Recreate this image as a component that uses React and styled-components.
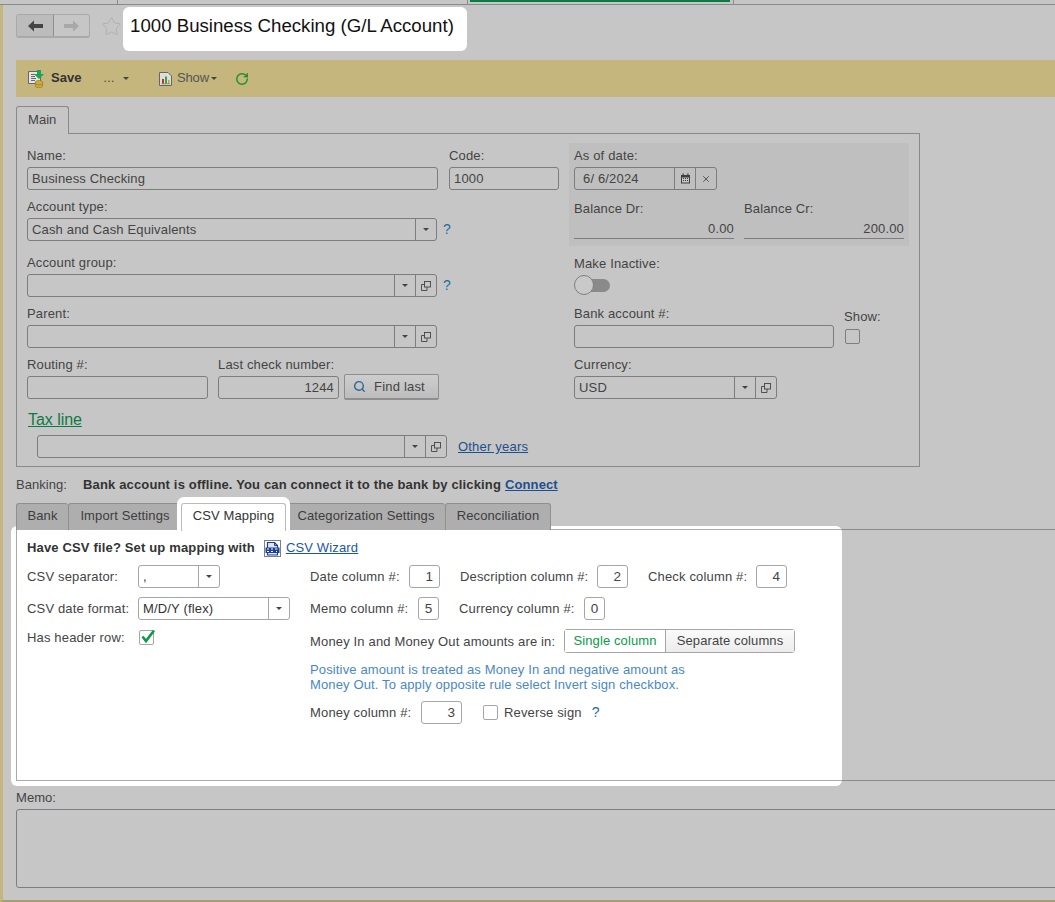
import React from 'react';
import styled, { createGlobalStyle } from 'styled-components';
import { RotateCw, Search, Star, X } from 'lucide-react';

const Global = createGlobalStyle`
  html, body { margin: 0; padding: 0; background: #c6c6c6; }
  * { box-sizing: border-box; }
  body { font-family: "Liberation Sans", Arial, sans-serif; font-size: 13px; color: #444; }
`;

const Page = styled.div`
  width: 1055px; height: 902px; overflow: hidden; background: #c6c6c6;
  display: flex; flex-direction: column;
`;
const TopStrip = styled.div`
  display: flex; height: 5px; flex: none; border-bottom: 1px solid #8a8a8a;
`;
const TopCell = styled.div`
  width: ${p => p.$w}px; height: 4px; border-right: 1px solid #8a8a8a; padding: 0 3px 0 2px;
`;
const GreenBar = styled.div`height: 2px; background: #0b7a45;`;
const Shell = styled.div`
  flex: 1; min-height: 0; border-left: 3px solid #c4b67d; border-bottom: 2px solid #a89e72;
  padding: 2px 0 0 13px; display: flex; flex-direction: column;
`;
const Header = styled.div`display: flex; align-items: flex-start; height: 44px; flex: none;`;
const Nav = styled.div`
  display: flex; margin-top: 7px; width: 74px; height: 24px;
  border: 1px solid #a9a9a9; border-bottom-width: 2px; border-radius: 3px;
`;
const NavBtn = styled.div`
  width: ${p => p.$w}px; display: flex; align-items: center; justify-content: center;
  ${p => p.$on ? 'background:#bcbcbc; border-right:1px solid #8e8e8e;' : ''}
`;
const StarBox = styled.div`margin: 9px 0 0 11px; width: 21px; height: 21px; color: #adadad;`;
const TitleCard = styled.div`
  margin-left: 1px; width: 344px; height: 44px; background: #fff; border-radius: 6px;
  padding: 7px 0 0 7px; font-size: 18.67px; line-height: 24px; color: #111; white-space: nowrap;
`;
const Toolbar = styled.div`
  flex: none; margin-top: 9px; height: 37px; background: #c4b67d; display: flex; align-items: center;
  padding-left: 12px; color: #444;
`;
const ToolSave = styled.span`font-weight: bold; margin: 0 0 2px 6px; color: #333;`;
const ToolDots = styled.span`margin: 0 0 2px 22px; font-size: 12px; color: #444; letter-spacing: .5px;`;
const ToolShow = styled.span`margin: 0 0 2px 5px; color: #555; letter-spacing: -.1px;`;
const ToolGap = styled.span`flex: none; width: ${p => p.$w}px;`;
const Caret = styled.i`
  display: inline-block; width: 0; height: 0; border-left: 3px solid transparent; border-right: 3px solid transparent;
  border-top: 3px solid ${p => p.$c || '#444'}; margin-left: ${p => p.$ml ?? 0}px;
`;
const MainTab = styled.div`
  margin-top: 9px; flex: none; width: 53px; height: 28px; margin-bottom: -1px; border: 1px solid #8a8a8a; border-bottom: none;
  border-radius: 3px 3px 0 0; background: #c6c6c6; position: relative; z-index: 1;
  padding: 5px 0 0 11px; line-height: 16px; color: #444; letter-spacing: .05px;
`;
const FormBox = styled.div`
  flex: none; width: 904px; height: 334px; border: 1px solid #8a8a8a;
  display: flex; padding: 9px 0 0 10px; gap: 10px;
`;
const LeftCol = styled.div`width: 532px; padding-top: 5px; display: flex; flex-direction: column;`;
const RightCol = styled.div`width: 340px; display: flex; flex-direction: column;`;
const Row = styled.div`
  display: flex; align-items: ${p => p.$align || 'flex-start'}; gap: ${p => p.$gap ?? 0}px;
  margin-top: ${p => p.$mt ?? 0}px; margin-left: ${p => p.$ml ?? 0}px;
`;
const Field = styled.div`
  display: flex; flex-direction: column; width: ${p => p.$w ? p.$w + 'px' : 'auto'};
  margin-top: ${p => p.$mt ?? 0}px; margin-left: ${p => p.$ml ?? 0}px;
`;
const Label = styled.div`
  height: 15px; line-height: 15px; margin-bottom: 4px; color: #444; white-space: nowrap; letter-spacing: .15px;
`;
const Input = styled.div`
  height: 23px; width: ${p => p.$w ? p.$w + 'px' : '100%'}; border: 1px solid #7d7d7d; border-radius: 3px;
  line-height: 21px; padding: 0 4px; color: #444; white-space: nowrap; letter-spacing: .15px;
  text-align: ${p => p.$right ? 'right' : 'left'};
`;
const Combo = styled.div`
  display: flex; height: 23px; width: ${p => p.$w}px; border-radius: 3px;
  border: 1px solid ${p => p.$light ? '#a6a6a6' : '#7d7d7d'}; color: ${p => p.$light ? '#333' : '#444'};
  line-height: 21px; letter-spacing: .16px;
`;
const ComboText = styled.div`flex: 1; padding-left: ${p => p.$pl ?? 4}px; white-space: nowrap; overflow: hidden;`;
const ComboBtn = styled.div`
  flex: none; width: ${p => p.$w ?? 21}px; height: 100%;
  border-left: 1px solid ${p => p.$light ? '#a6a6a6' : '#7d7d7d'}; display: flex; align-items: center; justify-content: center;
`;
const Help = styled.span`color: #1f6e9e; font-size: 14px; line-height: 23px; margin-left: ${p => p.$ml ?? 6}px;`;
const TaxLink = styled.a`
  display: block; margin: 11px 0 0 1px; font-size: 16px; line-height: 18px; color: #0b7a45; text-decoration: underline; letter-spacing: -.05px;
`;
const OtherLink = styled.a`
  margin-left: 11px; line-height: 23px; color: #1d4f8f; text-decoration: underline; letter-spacing: .2px;
`;
const FindBtn = styled.div`
  margin: -2px 0 0 5px; width: 95px; height: 26px; border: 1px solid #8e8e8e; border-bottom-width: 2px; border-radius: 2px;
  background: linear-gradient(#cdcdcd, #bdbdbd);
  display: flex; align-items: center; padding-left: 8px; gap: 8px; color: #444; letter-spacing: .2px;
`;
const AsOf = styled.div`
  background: #bfbfbf; height: 103px; padding: 5px 0 0 5px; display: flex; flex-direction: column;
`;
const Balance = styled.div`
  margin-top: -1px; height: 20px; border-bottom: 1px solid #7d7d7d; width: ${p => p.$w ?? 160}px; text-align: right;
  line-height: 19px; letter-spacing: .15px;
`;
const Track = styled.div`
  position: relative; width: 36px; height: 20px;
  &::before { content: ''; position: absolute; left: 4px; right: 0; top: 4px; height: 13px; border-radius: 7px; background: #8a8a8a; }
`;
const Thumb = styled.div`
  position: absolute; left: 0; top: 0; width: 20px; height: 20px; border-radius: 50%; background: #c9c9c9; border: 1px solid #808080; border-bottom-width: 1.5px;
`;
const Check = styled.div`
  flex: none; width: 15px; height: 15px; border: 1px solid ${p => p.$c || '#7d7d7d'}; border-radius: 2px;
  margin-top: ${p => p.$mt ?? 0}px; margin-left: ${p => p.$ml ?? 0}px; position: relative;
`;
const CheckMark = styled.svg`position: absolute; left: 0; top: -3px; overflow: visible;`;
const Banking = styled.div`flex: none; display: flex; margin-top: 10px; height: 15px; line-height: 15px; white-space: nowrap;`;
const BankingLabel = styled.span`width: 67px; color: #444; letter-spacing: .05px;`;
const BankingText = styled.span`font-weight: bold; color: #333; letter-spacing: .155px;`;
const BankLink = styled.a`margin-left: 4px; color: #1d4f8f; font-weight: bold; text-decoration: underline; letter-spacing: .1px;`;
const Tabs = styled.div`display: flex; flex: none; margin-top: 11px; height: 27px; position: relative; z-index: 2;`;
const Tab = styled.div`
  flex: none; width: ${p => p.$w}px; height: 27px; text-align: center; line-height: 24px; white-space: nowrap;
  border: 1px solid #8f8f8f; border-bottom: none; border-right-width: ${p => p.$last ? 1 : 0}px;
  border-radius: 3px 3px 0 0; background: #aeaeae; color: #3d3d3d; letter-spacing: .12px;
  ${p => p.$on && `
    background: #fff; color: #333; border: 1px solid #bbb; border-bottom: none; position: relative; z-index: 3;
    box-shadow: 0 0 0 4px #fff, 0 -2px 0 4px #fff; height: 28px;
  `}
`;
const TabBody = styled.div`
  flex: none; margin-top: -1px; height: 252px; border-top: 1px solid #8a8a8a; border-bottom: 1px solid #8a8a8a; position: relative;
`;
const Card = styled.div`
  position: relative; margin: -4px 0 0 -5px; width: 831px; height: 260px; background: #fff; border-radius: 6px; padding: 3px 0 5px 5px;
`;
const Inner = styled.div`
  height: 252px; border: 1px solid #aaa; border-right: none; padding: 9px 0 0 10px; color: #444;
`;
const HaveRow = styled.div`display: flex; align-items: center; height: 16px; white-space: nowrap;`;
const HaveText = styled.span`font-weight: bold; color: #333; letter-spacing: .16px; margin-right: 9px;`;
const IconNudge = styled.span`display: flex; flex: none; margin-top: 2px;`;
const WizardLink = styled.a`margin-left: 5px; color: #1a56a8; text-decoration: underline; letter-spacing: .15px;`;
const CsvGrid = styled.div`display: flex; margin-top: 10px;`;
const CsvLeft = styled.div`width: 283px; flex: none; display: flex; flex-direction: column;`;
const CsvRight = styled.div`flex: 1; display: flex; flex-direction: column;`;
const CsvRow = styled.div`display: flex; align-items: center; height: ${p => p.$h ?? 23}px; margin-top: ${p => p.$mt ?? 0}px;`;
const RowLabel = styled.div`flex: none; width: ${p => p.$w}px; margin-left: ${p => p.$ml ?? 0}px; color: #444; white-space: nowrap; letter-spacing: .16px;`;
const NumBox = styled.div`
  flex: none; height: 23px; width: ${p => p.$w}px; border: 1px solid #a6a6a6; border-radius: 3px; line-height: 21px;
  text-align: ${p => p.$center ? 'center' : 'right'}; padding-right: ${p => p.$center ? 0 : 6}px; color: #444; font-size: 13.5px;
`;
const Segs = styled.div`display: flex; height: 24px; width: 231px; border: 1px solid #a6a6a6; border-radius: 3px;`;
const Seg = styled.div`
  width: ${p => p.$w}px; flex: none; text-align: center; line-height: 22px; letter-spacing: .12px;
  ${p => p.$on ? 'color:#0b9a4b; background:#fff; border-right:1px solid #a6a6a6;' : 'color:#444; background:linear-gradient(#fafafa,#ececec);'}
`;
const InfoText = styled.div`
  margin-top: 9px; font-size: 13px; line-height: 15px; color: #4a88c4; letter-spacing: .14px; white-space: nowrap;
`;
const Side = styled.span`margin-left: 6px; white-space: nowrap; color: #444; letter-spacing: .15px;`;
const MemoLabel = styled.div`flex: none; margin-top: 9px; height: 15px; line-height: 15px; color: #444; letter-spacing: .05px;`;
const MemoBox = styled.div`flex: none; margin-top: 4px; width: 1050px; height: 79px; border: 1px solid #7d7d7d; border-radius: 3px;`;

const ArrowL = ({ c }) => (
  <svg width="15" height="12" viewBox="0 0 15 12"><path d="M0 6 6 .5V4h9v4H6v3.500z" fill={c} /></svg>
);
const ArrowR = ({ c }) => (
  <svg width="15" height="12" viewBox="0 0 15 12"><path d="M15 6 9 .5V4H0v4h9v3.500z" fill={c} /></svg>
);
const Popout = () => (
  <svg width="10" height="10" viewBox="0 0 10 10" fill="none" stroke="#444" strokeWidth=".9">
    <rect x="3.500" y=".5" width="6" height="5.500" />
    <path d="M3.500 3.500h-3v6h5.500V6" />
  </svg>
);
const SmallCaret = ({ c }) => <Caret $c={c} />;
const SaveIcon = () => (
  <svg width="17" height="18" viewBox="0 0 17 18">
    <path d="M.5 1.500h9l3 3v9H.5z" fill="#e6e6df" stroke="#666" />
    <path d="M3 4.500h6M3 6.500h4M3 8.500h5M3 10.500h4" stroke="#667" />
    <path d="M9 0h4v4h3l-5 5-5-5h3z" fill="#19a35c" />
    <ellipse cx="11" cy="12" rx="3.600" ry="1.600" fill="#d0a83a" stroke="#8d7322" strokeWidth=".6" />
    <path d="M7.400 12v4c0 1 1.600 1.700 3.600 1.700s3.600-.7 3.600-1.700v-4" fill="#d0a83a" stroke="#8d7322" strokeWidth=".6" />
    <path d="M7.500 14c1 1.200 6 1.200 7 0" stroke="#8d7322" strokeWidth=".6" fill="none" />
  </svg>
);
const ShowIcon = () => (
  <svg width="13" height="14" viewBox="0 0 13 14">
    <path d="M.5.5h8.500l3.500 3.500v9.500H.5z" fill="#ddd" stroke="#666" />
    <rect x="3" y="7" width="2" height="4.500" fill="#b33" />
    <rect x="6" y="4.500" width="2" height="7" fill="#3a3" />
    <rect x="9" y="8" width="1.500" height="3.500" fill="#c9a227" />
    <path d="M2.500 11.800h8.500" stroke="#555" strokeWidth=".6" />
  </svg>
);
const CsvIcon = () => (
  <svg width="17" height="17" viewBox="0 0 17 17">
    <rect x=".5" y=".5" width="16" height="16" fill="none" stroke="#000" strokeDasharray="1 1" />
    <path d="M3.500 2.500h7l3 3v9.500h-10z" fill="#dfe6f7" stroke="#1d3f9a" strokeWidth="1.200" />
    <path d="M10.500 2.500v3h3" fill="none" stroke="#1d3f9a" />
    <rect x="1.500" y="7.500" width="14" height="5.500" fill="#1d3f9a" />
    <path d="M3 9h2M3 11.500h2M7 9h2M7 11.500h2M11 9h2.500M12 11.500h1" stroke="#fff" />
  </svg>
);
const CalIcon = () => (
  <svg width="11" height="11" viewBox="0 0 11 11">
    <path d="M1 2h9v8.500H1z" fill="#3f3f3f" />
    <rect x="2" y="4.500" width="7" height="5" fill="#c6c6c6" />
    <rect x="2.500" y=".5" width="1.200" height="2" fill="#3f3f3f" />
    <rect x="7.300" y=".5" width="1.200" height="2" fill="#3f3f3f" />
    <path d="M3 5.500h1M5 5.500h1M7 5.500h1M3 7.500h1M5 7.500h1M7 7.500h1" stroke="#3f3f3f" />
  </svg>
);

export default function App() {
  return (
    <Page>
      <Global />
      <TopStrip>
        <TopCell $w={118} />
        <TopCell $w={350} />
        <TopCell $w={266}><GreenBar /></TopCell>
      </TopStrip>
      <Shell>
        <Header>
          <Nav>
            <NavBtn $w={37} $on><ArrowL c="#444" /></NavBtn>
            <NavBtn $w={35}><ArrowR c="#a8a8a8" /></NavBtn>
          </Nav>
          <StarBox><Star size={21} strokeWidth={1} /></StarBox>
          <TitleCard>1000 Business Checking (G/L Account)</TitleCard>
        </Header>
        <Toolbar>
          <SaveIcon />
          <ToolSave>Save</ToolSave>
          <ToolDots>...</ToolDots>
          <Caret $ml={8} />
          <ToolGap $w={30} />
          <ShowIcon />
          <ToolShow>Show</ToolShow>
          <Caret $ml={2} />
          <ToolGap $w={18} />
          <RotateCw size={14} color="#1f8f2e" strokeWidth={2.4} />
        </Toolbar>
        <MainTab>Main</MainTab>
        <FormBox>
          <LeftCol>
            <Row $gap={11}>
              <Field $w={411}><Label>Name:</Label><Input>Business Checking</Input></Field>
              <Field $w={110}><Label>Code:</Label><Input>1000</Input></Field>
            </Row>
            <Field $mt={9}>
              <Label>Account type:</Label>
              <Row>
                <Combo $w={410}><ComboText>Cash and Cash Equivalents</ComboText><ComboBtn><SmallCaret /></ComboBtn></Combo>
                <Help>?</Help>
              </Row>
            </Field>
            <Field $mt={14}>
              <Label>Account group:</Label>
              <Row>
                <Combo $w={410}><ComboText /><ComboBtn><SmallCaret /></ComboBtn><ComboBtn><Popout /></ComboBtn></Combo>
                <Help>?</Help>
              </Row>
            </Field>
            <Field $mt={9}>
              <Label>Parent:</Label>
              <Combo $w={410}><ComboText /><ComboBtn><SmallCaret /></ComboBtn><ComboBtn><Popout /></ComboBtn></Combo>
            </Field>
            <Row $gap={10} $mt={9}>
              <Field $w={181}><Label>Routing #:</Label><Input /></Field>
              <Field>
                <Label>Last check number:</Label>
                <Row>
                  <Input $w={121} $right>1244</Input>
                  <FindBtn><Search size={13} color="#2c6690" strokeWidth={2.6} />Find last</FindBtn>
                </Row>
              </Field>
            </Row>
            <TaxLink>Tax line</TaxLink>
            <Row $mt={6} $ml={10}>
              <Combo $w={410}><ComboText /><ComboBtn><SmallCaret /></ComboBtn><ComboBtn><Popout /></ComboBtn></Combo>
              <OtherLink>Other years</OtherLink>
            </Row>
          </LeftCol>
          <RightCol>
            <AsOf>
              <Field>
                <Label>As of date:</Label>
                <Combo $w={143}>
                  <ComboText $pl={8}>6/ 6/2024</ComboText>
                  <ComboBtn><CalIcon /></ComboBtn>
                  <ComboBtn $w={21}><X size={10} color="#444" strokeWidth={2} /></ComboBtn>
                </Combo>
              </Field>
              <Row $mt={11} $gap={10}>
                <Field><Label>Balance Dr:</Label><Balance>0.00</Balance></Field>
                <Field><Label>Balance Cr:</Label><Balance>200.00</Balance></Field>
              </Row>
            </AsOf>
            <Field $mt={10} $ml={5}>
              <Label>Make Inactive:</Label>
              <Track><Thumb /></Track>
            </Field>
            <Row $mt={11} $ml={5}>
              <Field $w={260}><Label>Bank account #:</Label><Input /></Field>
              <Field $ml={10} $mt={3}>
                <Label>Show:</Label>
                <Check $mt={1} $ml={1} />
              </Field>
            </Row>
            <Field $mt={9} $ml={5}>
              <Label>Currency:</Label>
              <Combo $w={203}><ComboText>USD</ComboText><ComboBtn><SmallCaret /></ComboBtn><ComboBtn><Popout /></ComboBtn></Combo>
            </Field>
          </RightCol>
        </FormBox>
        <Banking>
          <BankingLabel>Banking:</BankingLabel>
          <BankingText>Bank account is offline. You can connect it to the bank by clicking</BankingText>
          <BankLink>Connect</BankLink>
        </Banking>
        <Tabs>
          <Tab $w={52}>Bank</Tab>
          <Tab $w={113}>Import Settings</Tab>
          <Tab $w={105} $on>CSV Mapping</Tab>
          <Tab $w={159}>Categorization Settings</Tab>
          <Tab $w={106} $last>Reconciliation</Tab>
        </Tabs>
        <TabBody>
          <Card>
            <Inner>
              <HaveRow>
                <HaveText>Have CSV file? Set up mapping with</HaveText>
                <IconNudge><CsvIcon /></IconNudge>
                <WizardLink>CSV Wizard</WizardLink>
              </HaveRow>
              <CsvGrid>
                <CsvLeft>
                  <CsvRow>
                    <RowLabel $w={111}>CSV separator:</RowLabel>
                    <Combo $w={82} $light><ComboText>,</ComboText><ComboBtn $light><SmallCaret /></ComboBtn></Combo>
                  </CsvRow>
                  <CsvRow $mt={9}>
                    <RowLabel $w={111}>CSV date format:</RowLabel>
                    <Combo $w={152} $light><ComboText>M/D/Y (flex)</ComboText><ComboBtn $light><SmallCaret /></ComboBtn></Combo>
                  </CsvRow>
                  <CsvRow $mt={10} $h={15}>
                    <RowLabel $w={112}>Has header row:</RowLabel>
                    <Check $c="#a6a6a6">
                      <CheckMark width="16" height="16" viewBox="0 0 16 16">
                        <path d="M2.500 8.500l3.500 4.500L14 2.500" fill="none" stroke="#0b9a4b" strokeWidth="2.600" />
                      </CheckMark>
                    </Check>
                  </CsvRow>
                </CsvLeft>
                <CsvRight>
                  <CsvRow>
                    <RowLabel $w={99}>Date column #:</RowLabel>
                    <NumBox $w={31}>1</NumBox>
                    <RowLabel $w={137} $ml={20}>Description column #:</RowLabel>
                    <NumBox $w={31}>2</NumBox>
                    <RowLabel $w={108} $ml={20}>Check column #:</RowLabel>
                    <NumBox $w={31}>4</NumBox>
                  </CsvRow>
                  <CsvRow $mt={9}>
                    <RowLabel $w={108}>Memo column #:</RowLabel>
                    <NumBox $w={21} $center>5</NumBox>
                    <RowLabel $w={125} $ml={20}>Currency column #:</RowLabel>
                    <NumBox $w={21} $center>0</NumBox>
                  </CsvRow>
                  <CsvRow $mt={9} $h={24}>
                    <RowLabel $w={254}>Money In and Money Out amounts are in:</RowLabel>
                    <Segs>
                      <Seg $w={101} $on>Single column</Seg>
                      <Seg $w={128}>Separate columns</Seg>
                    </Segs>
                  </CsvRow>
                  <InfoText>
                    Positive amount is treated as Money In and negative amount as<br />
                    Money Out. To apply opposite rule select Invert sign checkbox.
                  </InfoText>
                  <CsvRow $mt={9}>
                    <RowLabel $w={111}>Money column #:</RowLabel>
                    <NumBox $w={41}>3</NumBox>
                    <Check $c="#a6a6a6" $ml={21} />
                    <Side>Reverse sign</Side>
                    <Help $ml={10}>?</Help>
                  </CsvRow>
                </CsvRight>
              </CsvGrid>
            </Inner>
          </Card>
        </TabBody>
        <MemoLabel>Memo:</MemoLabel>
        <MemoBox />
      </Shell>
    </Page>
  );
}
